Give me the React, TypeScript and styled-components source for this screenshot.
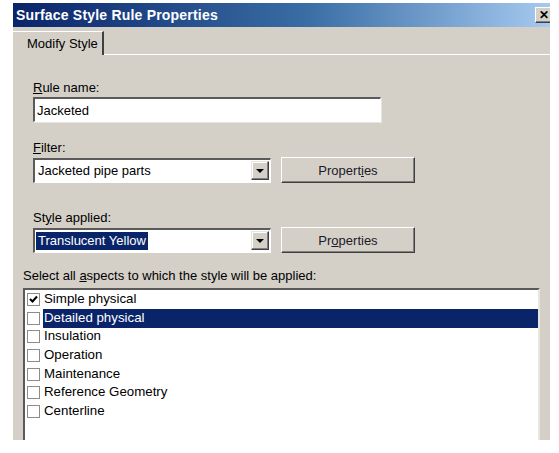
import React from "react";
import styled, { createGlobalStyle } from "styled-components";

const Global = createGlobalStyle`
  html, body { margin: 0; padding: 0; background: #ffffff; }
  body { font-family: "Liberation Sans", Arial, sans-serif; font-size: 13px; color: #000; }
`;

const Window = styled.div`
  margin: 3px 0 0 13px;
  width: 537px;
  height: 437px;
  background: #d4d0c8;
  overflow: hidden;
  display: flex;
  flex-direction: column;
`;

const TitleBar = styled.div`
  height: 24px;
  flex: none;
  display: flex;
  align-items: center;
  justify-content: space-between;
  padding-left: 3px;
  background: linear-gradient(90deg, #0a246a 0%, #3a6ea5 55%, #a6caf0 100%);
  overflow: hidden;
`;

const Title = styled.span`
  color: #fff;
  font-weight: bold;
  font-size: 14px;
  letter-spacing: 0.2px;
`;

const CloseButton = styled.div`
  width: 16px;
  height: 14px;
  margin-right: -2px;
  background: #d4d0c8;
  border-top: 1px solid #fff;
  border-left: 1px solid #fff;
  border-bottom: 1px solid #404040;
  box-shadow: inset -1px -1px 0 #808080;
  display: flex;
  align-items: center;
  justify-content: center;
  font-weight: bold;
  font-size: 12px;
  line-height: 1;
`;

const TabStrip = styled.div`
  height: 26px;
  flex: none;
  display: flex;
  align-items: flex-end;
  margin-top: 2px;
`;

const Tab = styled.div`
  width: 91px;
  height: 24px;
  padding-left: 14px;
  box-sizing: border-box;
  display: flex;
  align-items: center;
  border-top: 1px solid #fff;
  border-right: 2px solid #404040;
  font-size: 13px;
`;

const TabLine = styled.div`
  flex: 1;
  height: 1px;
  background: #fff;
  align-self: flex-end;
`;

const Content = styled.div`
  flex: 1;
  padding: 25px 0 0 20px;
  display: flex;
  flex-direction: column;
`;

const Label = styled.div<{ $mt?: number }>`
  height: 16px;
  line-height: 16px;
  margin-top: ${(p) => p.$mt ?? 0}px;
  margin-bottom: 1px;
  font-size: 13px;
  color: #000;
`;

const U = styled.span`
  text-decoration: underline;
`;

const TextBox = styled.div`
  width: 348px;
  height: 25px;
  box-sizing: border-box;
  background: #fff;
  border-top: 2px solid #5a5a5a;
  border-left: 2px solid #5a5a5a;
  border-right: 1px solid #fff;
  border-bottom: 1px solid #fff;
  box-shadow: 1px 1px 0 #e6e4de;
  padding-left: 2px;
  display: flex;
  align-items: center;
  font-size: 13px;
`;

const Row = styled.div`
  display: flex;
  align-items: center;
  gap: 10px;
`;

const Combo = styled.div`
  width: 238px;
  height: 25px;
  box-sizing: border-box;
  background: #fff;
  border-top: 2px solid #5a5a5a;
  border-left: 2px solid #5a5a5a;
  border-right: 1px solid #fff;
  border-bottom: 1px solid #fff;
  display: flex;
  align-items: center;
  padding: 0 1px 0 1px;
`;

const ComboText = styled.div<{ $selected?: boolean }>`
  flex: 1;
  display: flex;
  align-items: center;
  font-size: 13px;
  span {
    padding: 0 2px;
    height: 18px;
    line-height: 18px;
    background: ${(p) => (p.$selected ? "#0a246a" : "transparent")};
    color: ${(p) => (p.$selected ? "#fff" : "#000")};
  }
`;

const DropButton = styled.div`
  width: 18px;
  height: 19px;
  box-sizing: border-box;
  background: #d4d0c8;
  border-top: 1px solid #e8e6e0;
  border-left: 1px solid #e8e6e0;
  border-right: 1px solid #404040;
  border-bottom: 1px solid #404040;
  box-shadow: inset -1px -1px 0 #808080, inset 1px 1px 0 #fff;
  display: flex;
  align-items: center;
  justify-content: center;
`;

const Arrow = styled.div`
  width: 0;
  height: 0;
  border-left: 4px solid transparent;
  border-right: 4px solid transparent;
  border-top: 4px solid #000;
`;

const Button = styled.div`
  width: 134px;
  height: 26px;
  box-sizing: border-box;
  background: #d4d0c8;
  border-top: 1px solid #fff;
  border-left: 1px solid #fff;
  border-right: 1px solid #404040;
  border-bottom: 1px solid #404040;
  box-shadow: inset -1px -1px 0 #808080;
  display: flex;
  align-items: center;
  justify-content: center;
  font-size: 13px;
  color: #1a1a2a;
`;

const AspectsLabel = styled.div`
  margin: 15px 0 4px -10px;
  font-size: 13px;
  height: 16px;
  line-height: 16px;
`;

const ListBox = styled.div`
  margin-left: -10px;
  width: 517px;
  flex: 1;
  box-sizing: border-box;
  background: #fff;
  border-top: 2px solid #5a5a5a;
  border-left: 2px solid #5a5a5a;
  border-right: 2px solid #e8e6e0;
  padding: 0 0 0 2px;
  display: flex;
  flex-direction: column;
`;

const Item = styled.div`
  height: 18.7px;
  display: flex;
  align-items: center;
  gap: 3px;
`;

const Check = styled.div`
  width: 13px;
  height: 13px;
  box-sizing: border-box;
  border: 1px solid #8c8c8c;
  background: #fff;
  display: flex;
  align-items: center;
  justify-content: center;
`;

const ItemText = styled.div<{ $selected?: boolean }>`
  flex: 1;
  height: 19px;
  line-height: 18px;
  padding-left: 1px;
  font-size: 13.3px;
  background: ${(p) => (p.$selected ? "#0a246a" : "transparent")};
  color: ${(p) => (p.$selected ? "#fff" : "#000")};
`;

const items = [
  { label: "Simple physical", checked: true },
  { label: "Detailed physical", selected: true },
  { label: "Insulation" },
  { label: "Operation" },
  { label: "Maintenance" },
  { label: "Reference Geometry" },
  { label: "Centerline" },
];

export default function App() {
  return (
    <>
      <Global />
      <Window>
        <TitleBar>
          <Title>Surface Style Rule Properties</Title>
          <CloseButton>✕</CloseButton>
        </TitleBar>
        <TabStrip>
          <Tab>Modify Style</Tab>
          <TabLine />
        </TabStrip>
        <Content>
          <Label>
            <U>R</U>ule name:
          </Label>
          <TextBox>Jacketed</TextBox>
          <Label $mt={18}>
            <U>F</U>ilter:
          </Label>
          <Row>
            <Combo>
              <ComboText>
                <span>Jacketed pipe parts</span>
              </ComboText>
              <DropButton>
                <Arrow />
              </DropButton>
            </Combo>
            <Button>
              Propert<U>i</U>es
            </Button>
          </Row>
          <Label $mt={27}>
            St<U>y</U>le applied:
          </Label>
          <Row>
            <Combo>
              <ComboText $selected>
                <span>Translucent Yellow</span>
              </ComboText>
              <DropButton>
                <Arrow />
              </DropButton>
            </Combo>
            <Button>
              Pr<U>o</U>perties
            </Button>
          </Row>
          <AspectsLabel>
            Select all <U>a</U>spects to which the style will be applied:
          </AspectsLabel>
          <ListBox>
            {items.map((it) => (
              <Item key={it.label}>
                <Check>
                  {it.checked && (
                    <svg width="9" height="9" viewBox="0 0 9 9">
                      <path d="M1 4 L3.5 6.5 L8 1.5" stroke="#000" strokeWidth="2" fill="none" />
                    </svg>
                  )}
                </Check>
                <ItemText $selected={it.selected}>{it.label}</ItemText>
              </Item>
            ))}
          </ListBox>
        </Content>
      </Window>
    </>
  );
}
